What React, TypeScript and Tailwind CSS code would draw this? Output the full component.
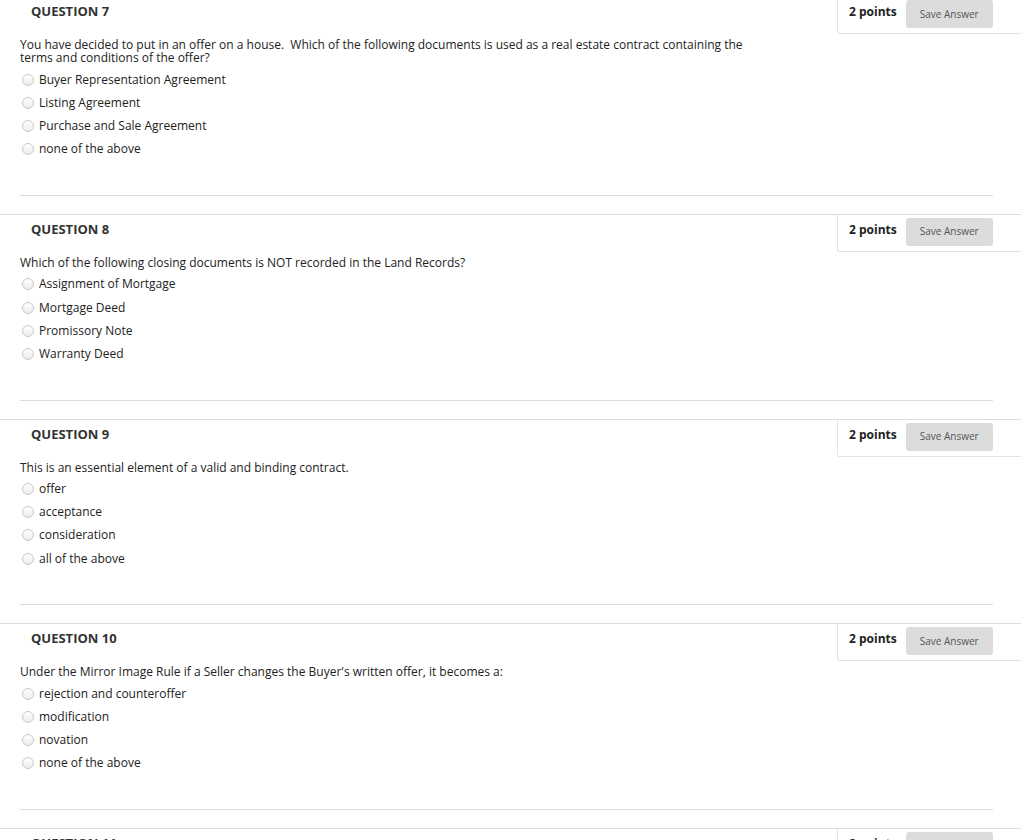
import React from 'react';

type Question = {
  num: number;
  text: React.ReactNode;
  options: string[];
};

const questions: Question[] = [
  {
    num: 7,
    text: (
      <>
        You have decided to put in an offer on a house.{'\u00a0'} Which of the following documents is used as a real estate contract containing the
        <br />
        terms and conditions of the offer?
      </>
    ),
    options: ['Buyer Representation Agreement', 'Listing Agreement', 'Purchase and Sale Agreement', 'none of the above'],
  },
  {
    num: 8,
    text: 'Which of the following closing documents is NOT recorded in the Land Records?',
    options: ['Assignment of Mortgage', 'Mortgage Deed', 'Promissory Note', 'Warranty Deed'],
  },
  {
    num: 9,
    text: 'This is an essential element of a valid and binding contract.',
    options: ['offer', 'acceptance', 'consideration', 'all of the above'],
  },
  {
    num: 10,
    text: "Under the Mirror Image Rule if a Seller changes the Buyer's written offer, it becomes a:",
    options: ['rejection and counteroffer', 'modification', 'novation', 'none of the above'],
  },
  {
    num: 11,
    text: '',
    options: [],
  },
];

const Radio = () => (
  <span className="ml-[2px] mr-[5px] inline-block h-[12px] w-[12px] shrink-0 rounded-full border border-[#c9c9c9] bg-gradient-to-b from-white to-[#ececec]" />
);

const QuestionBlock = ({ q }: { q: Question }) => (
  <div className="w-[1021px] border-t border-[#dedede]">
    <div className="flex h-[37px]">
      <div className="flex-1 pl-[31px] pt-[6px] text-[13px] font-bold leading-[17px] text-[#333]">
        QUESTION {q.num}
      </div>
      <div className="flex w-[184px] items-start rounded-bl-[3px] border-b border-l border-[#e3e3e3]">
        <span className="ml-[11px] mt-[7px] text-[12px] font-bold leading-[16px] text-[#222]">2 points</span>
        <button className="ml-[9px] mt-[3px] h-[28px] w-[87px] rounded-[3px] bg-[#dcdcdc] text-[10px] text-[#555]">
          Save Answer
        </button>
      </div>
    </div>
    <div className="pl-[20px] pt-[4px]">
      <p className="mb-[4px] text-[12px] leading-[13px] text-[#222]">{q.text}</p>
      {q.options.map((o) => (
        <div key={o} className="flex h-[23.2px] items-center">
          <Radio />
          <span className="text-[12px] text-[#222]">{o}</span>
        </div>
      ))}
      <div className="mr-[28px] mt-[34px] border-t border-[#dedede]" />
    </div>
    <div className="h-[18px]" />
  </div>
);

const App: React.FC = () => {
  return (
    <div className="h-[840px] w-[1024px] overflow-hidden bg-white font-['Open_Sans',sans-serif]">
      <div className="-mt-[4px]">
        {questions.map((q) => (
          <QuestionBlock key={q.num} q={q} />
        ))}
      </div>
    </div>
  );
};

export default App;
